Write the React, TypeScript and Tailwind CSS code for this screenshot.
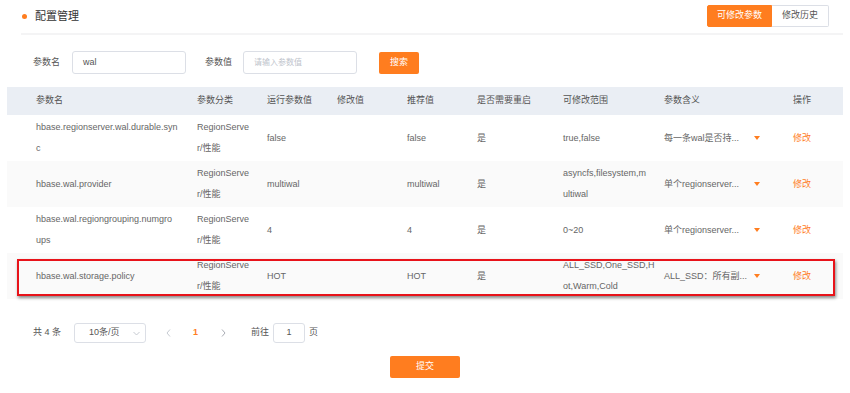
import React from "react";

const FONT = { fontFamily: '"Liberation Sans", "Noto Sans CJK SC", sans-serif' };

type Row = {
  name: string[];
  cat: string[];
  run: string;
  mod: string;
  rec: string;
  restart: string;
  range: string[];
  meaning: string;
  bg: string;
};

const rows: Row[] = [
  {
    name: ["hbase.regionserver.wal.durable.syn", "c"],
    cat: ["RegionServe", "r/性能"],
    run: "false",
    mod: "",
    rec: "false",
    restart: "是",
    range: ["true,false"],
    meaning: "每一条wal是否持...",
    bg: "bg-white",
  },
  {
    name: ["hbase.wal.provider"],
    cat: ["RegionServe", "r/性能"],
    run: "multiwal",
    mod: "",
    rec: "multiwal",
    restart: "是",
    range: ["asyncfs,filesystem,m", "ultiwal"],
    meaning: "单个regionserver...",
    bg: "bg-[#fafafa]",
  },
  {
    name: ["hbase.wal.regiongrouping.numgro", "ups"],
    cat: ["RegionServe", "r/性能"],
    run: "4",
    mod: "",
    rec: "4",
    restart: "是",
    range: ["0~20"],
    meaning: "单个regionserver...",
    bg: "bg-white",
  },
  {
    name: ["hbase.wal.storage.policy"],
    cat: ["RegionServe", "r/性能"],
    run: "HOT",
    mod: "",
    rec: "HOT",
    restart: "是",
    range: ["ALL_SSD,One_SSD,H", "ot,Warm,Cold"],
    meaning: "ALL_SSD：所有副...",
    bg: "bg-[#fafafa]",
  },
];

const cols = "grid grid-cols-[180px_70px_70px_70px_70px_86px_101px_129px_60px]";

function Lines({ lines }: { lines: string[] }) {
  return (
    <div className="flex flex-col">
      {lines.map((l, i) => (
        <span key={i} className="whitespace-nowrap">
          {l}
        </span>
      ))}
    </div>
  );
}

export default function App() {
  return (
    <div className="w-[850px] h-[393px] bg-white text-[#666] overflow-hidden" style={FONT}>
      {/* header */}
      <div className="flex items-center justify-between pt-[5px] pl-[22px] pr-[21px]">
        <div className="flex items-center">
          <span className="w-[5px] h-[5px] rounded-full bg-[#ff7d1f]" />
          <span className="ml-[8px] text-[11px] text-[#333] leading-[22px]">配置管理</span>
        </div>
        <div className="flex text-[9px]">
          <div className="w-[65px] h-[22px] flex items-center justify-center bg-[#ff7d1f] text-white rounded-l-[2px] border border-[#ff7d1f]">
            可修改参数
          </div>
          <div className="w-[57px] h-[22px] flex items-center justify-center bg-white text-[#555] rounded-r-[2px] border border-l-0 border-[#dcdfe6]">
            修改历史
          </div>
        </div>
      </div>
      <div className="ml-[21px] mr-[7px] mt-[6px] h-[2px] bg-[#f4f4f5]" />

      {/* search */}
      <div className="flex items-center mt-[16px] pl-[33px] text-[9px]">
        <span className="text-[#555]">参数名</span>
        <div className="ml-[12px] w-[114px] h-[23px] border border-[#dcdfe6] rounded-[3px] flex items-center pl-[10px] text-[#555]">
          wal
        </div>
        <span className="ml-[19px] text-[#555]">参数值</span>
        <div className="ml-[11px] w-[114px] h-[23px] border border-[#dcdfe6] rounded-[3px] flex items-center pl-[10px] text-[#c0c4cc] text-[8px]">
          请输入参数值
        </div>
        <div className="ml-[22px] w-[40px] h-[22px] bg-[#ff7d1f] text-white flex items-center justify-center rounded-[2px]">
          搜索
        </div>
      </div>

      {/* table */}
      <div className="relative mt-[13px] ml-[7px] w-[836px] text-[9px]">
        <div className={`${cols} h-[28px] items-center bg-[#eaeef4] text-[#555]`}>
          <div className="pl-[29px]">参数名</div>
          <div className="pl-[10px]">参数分类</div>
          <div className="pl-[10px]">运行参数值</div>
          <div className="pl-[10px]">修改值</div>
          <div className="pl-[10px]">推荐值</div>
          <div className="pl-[10px]">是否需要重启</div>
          <div className="pl-[10px]">可修改范围</div>
          <div className="pl-[10px]">参数含义</div>
          <div className="pl-[10px]">操作</div>
        </div>
        {rows.map((r, i) => (
          <div key={i} className={`${cols} h-[46px] items-center leading-[21px] ${r.bg}`}>
            <div className="pl-[29px]">
              <Lines lines={r.name} />
            </div>
            <div className="pl-[10px]">
              <Lines lines={r.cat} />
            </div>
            <div className="pl-[10px]">{r.run}</div>
            <div className="pl-[10px]">{r.mod}</div>
            <div className="pl-[10px]">{r.rec}</div>
            <div className="pl-[10px]">{r.restart}</div>
            <div className="pl-[10px]">
              <Lines lines={r.range} />
            </div>
            <div className="pl-[10px] flex items-center">
              <span className="w-[84px] whitespace-nowrap">{r.meaning}</span>
              <span className="ml-[6px] w-0 h-0 border-l-[3px] border-r-[3px] border-t-[4px] border-l-transparent border-r-transparent border-t-[#ff7d1f]" />
            </div>
            <div className="pl-[10px] text-[#ff7d1f]">修改</div>
          </div>
        ))}
        {/* annotation */}
        <div className="absolute left-[10px] top-[172px] w-[818px] h-[37px] border-[2px] border-[#e8131a] shadow-[1px_2px_3px_rgba(0,0,0,0.45)] pointer-events-none" />
      </div>

      {/* pagination */}
      <div className="flex items-center mt-[24px] pl-[33px] text-[9px] text-[#555]">
        <span>共 4 条</span>
        <div className="ml-[13px] w-[72px] h-[20px] border border-[#dcdfe6] rounded-[3px] flex items-center justify-between pl-[14px] pr-[5px]">
          <span>10条/页</span>
          <svg width="7" height="5" viewBox="0 0 7 5">
            <path d="M0.5 1 L3.5 4 L6.5 1" fill="none" stroke="#c0c4cc" strokeWidth="0.9" />
          </svg>
        </div>
        <svg className="ml-[20px]" width="5" height="8" viewBox="0 0 5 8">
          <path d="M4 0.5 L1 4 L4 7.5" fill="none" stroke="#c0c4cc" strokeWidth="0.9" />
        </svg>
        <span className="ml-[22px] text-[#ff7d1f] font-bold">1</span>
        <svg className="ml-[23px]" width="5" height="8" viewBox="0 0 5 8">
          <path d="M1 0.5 L4 4 L1 7.5" fill="none" stroke="#a0a4ab" strokeWidth="0.9" />
        </svg>
        <span className="ml-[25px]">前往</span>
        <div className="ml-[4px] w-[32px] h-[20px] border border-[#dcdfe6] rounded-[3px] flex items-center justify-center">
          1
        </div>
        <span className="ml-[4px]">页</span>
      </div>

      {/* submit */}
      <div className="flex justify-center mt-[13px]">
        <div className="w-[70px] h-[22px] bg-[#ff7d1f] text-white text-[9px] flex items-center justify-center rounded-[2px]">
          提交
        </div>
      </div>
    </div>
  );
}
